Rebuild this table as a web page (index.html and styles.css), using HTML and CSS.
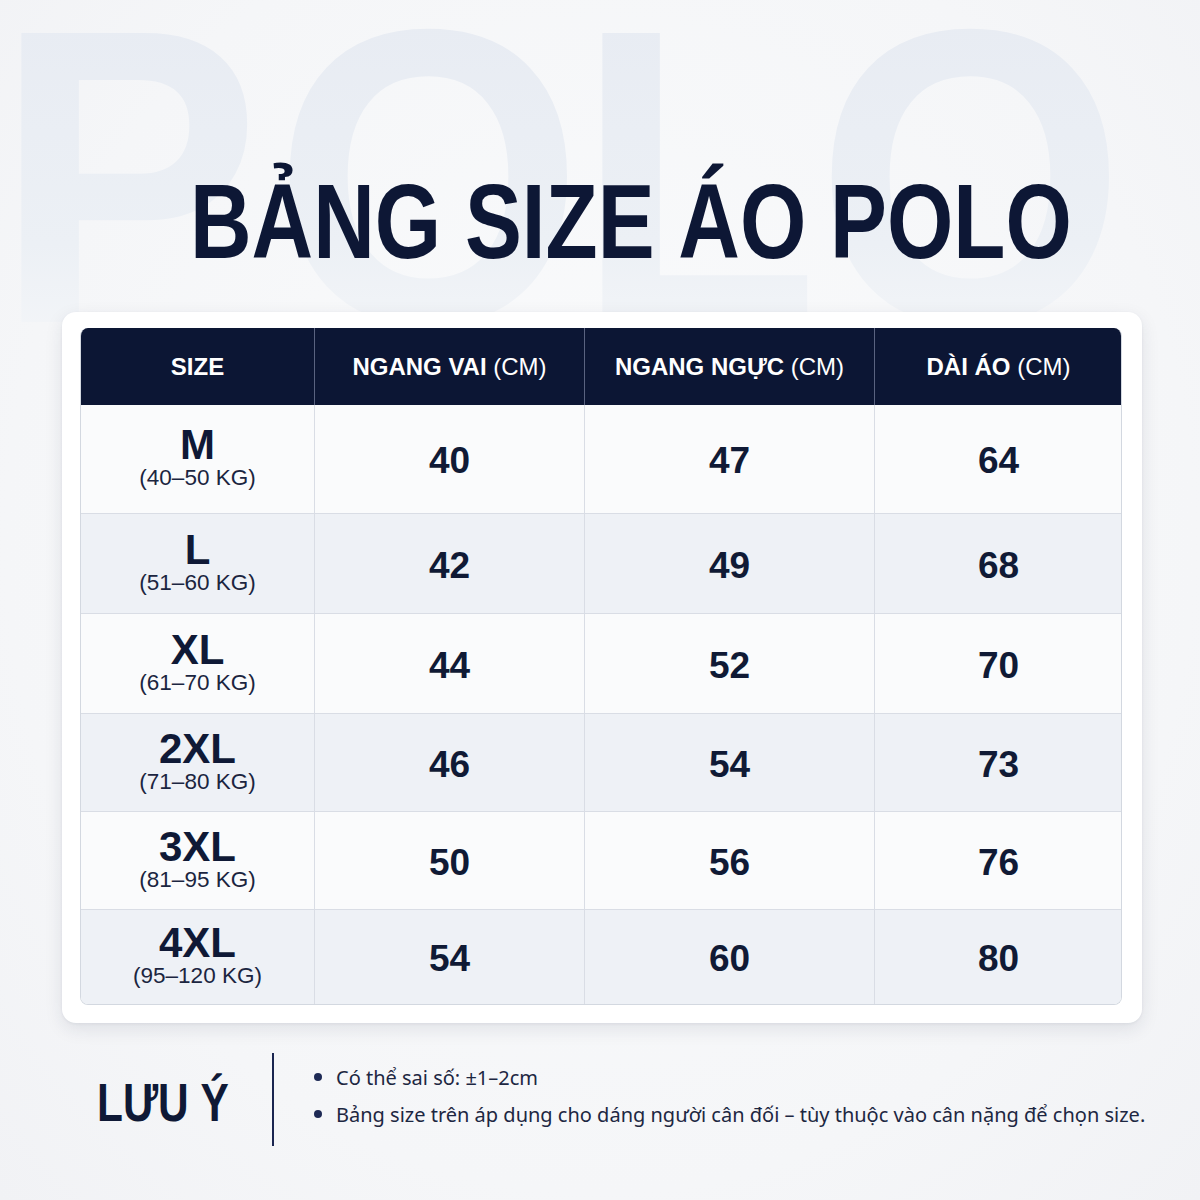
FILE: index.html
```html
<!DOCTYPE html>
<html lang="vi">
<head>
<meta charset="utf-8">
<title>Bảng size áo polo</title>
<link rel="stylesheet" href="styles.css">
</head>
<body>
<div class="page">
  <svg class="watermark" width="1200" height="360" viewBox="0 0 1200 360" aria-hidden="true">
    <defs>
      <linearGradient id="wmfade" gradientUnits="userSpaceOnUse" x1="0" y1="20" x2="0" y2="340">
        <stop offset="0" stop-color="#e8ecf3"/>
        <stop offset="0.7" stop-color="#ecf0f5"/>
        <stop offset="1" stop-color="#f3f5f8"/>
      </linearGradient>
    </defs>
    <g transform="scale(0.95,1)">
      <text class="wm-text" x="-5.6 287.8 606 858.3" y="322" fill="url(#wmfade)">POLO</text>
    </g>
  </svg>

  <h1 class="title"><span class="title-text">BẢNG SIZE ÁO POLO</span></h1>

  <div class="card">
    <div class="table">
      <div class="row head">
        <div class="cell"><span class="th">SIZE</span></div>
        <div class="cell"><span class="th">NGANG VAI <span class="unit">(CM)</span></span></div>
        <div class="cell"><span class="th">NGANG NGỰC <span class="unit">(CM)</span></span></div>
        <div class="cell"><span class="th">DÀI ÁO <span class="unit">(CM)</span></span></div>
      </div>
      <div class="row r1">
        <div class="cell size"><span class="lbl">M</span><span class="kg">(40–50 KG)</span></div>
        <div class="cell num">40</div>
        <div class="cell num">47</div>
        <div class="cell num">64</div>
      </div>
      <div class="row alt">
        <div class="cell size"><span class="lbl">L</span><span class="kg">(51–60 KG)</span></div>
        <div class="cell num">42</div>
        <div class="cell num">49</div>
        <div class="cell num">68</div>
      </div>
      <div class="row">
        <div class="cell size"><span class="lbl">XL</span><span class="kg">(61–70 KG)</span></div>
        <div class="cell num">44</div>
        <div class="cell num">52</div>
        <div class="cell num">70</div>
      </div>
      <div class="row alt r98">
        <div class="cell size"><span class="lbl">2XL</span><span class="kg">(71–80 KG)</span></div>
        <div class="cell num">46</div>
        <div class="cell num">54</div>
        <div class="cell num">73</div>
      </div>
      <div class="row r98">
        <div class="cell size"><span class="lbl">3XL</span><span class="kg">(81–95 KG)</span></div>
        <div class="cell num">50</div>
        <div class="cell num">56</div>
        <div class="cell num">76</div>
      </div>
      <div class="row alt last">
        <div class="cell size"><span class="lbl">4XL</span><span class="kg">(95–120 KG)</span></div>
        <div class="cell num">54</div>
        <div class="cell num">60</div>
        <div class="cell num">80</div>
      </div>
    </div>
  </div>

  <div class="note">
    <div class="note-title"><span class="note-title-text">LƯU Ý</span></div>
    <div class="note-divider"></div>
    <ul class="note-list">
      <li>Có thể sai số: ±1–2cm</li>
      <li>Bảng size trên áp dụng cho dáng người cân đối – tùy thuộc vào cân nặng để chọn size.</li>
    </ul>
  </div>
</div>
</body>
</html>
```

FILE: styles.css
```css
* { box-sizing: border-box; }

html, body {
  margin: 0;
  padding: 0;
  background: #f6f7f9;
}

body {
  font-family: "Liberation Sans", Arial, sans-serif;
  color: #0f1936;
}

.page {
  position: relative;
  width: 1200px;
  height: 1200px;
  overflow: hidden;
  background: radial-gradient(ellipse at 50% 45%, #fafbfc 0%, #f5f6f8 70%, #f1f2f5 100%);
}

.watermark {
  position: absolute;
  left: 0;
  top: 0;
  z-index: 0;
}

.wm-text {
  font-family: "Liberation Sans", Arial, sans-serif;
  font-weight: 700;
  font-size: 420px;
}

.title {
  position: relative;
  z-index: 1;
  margin: 0;
  padding: 168px 0 0 190px;
  font-family: "Liberation Sans", Arial, sans-serif;
  font-weight: 700;
  font-size: 106px;
  line-height: 106px;
  color: #0d1735;
  white-space: nowrap;
  height: 274px;
}

.title-text {
  display: inline-block;
  transform: scaleX(0.805);
  transform-origin: 0 0;
}

.card {
  position: relative;
  z-index: 1;
  margin: 38px 0 0 62px;
  width: 1080px;
  padding: 16px 20px 18px 18px;
  background: #ffffff;
  border-radius: 14px;
  box-shadow: 0 6px 18px rgba(25, 35, 70, 0.10), 0 1px 3px rgba(25, 35, 70, 0.06);
}

.table {
  border-radius: 8px;
  overflow: hidden;
  border: 1px solid #d3d8e0;
  border-top: none;
}

.row {
  display: grid;
  grid-template-columns: 233px 270px 290px 248px;
  height: 100px;
  background: #fafbfc;
  border-top: 1px solid #d9dde5;
}

.row.r1 { height: 108px; border-top: none; }
.row.r98 { height: 98px; }
.row.last { height: 95px; }
.row.alt { background: #eef1f6; }

.cell {
  display: flex;
  align-items: center;
  justify-content: center;
  border-left: 1px solid #d9dde5;
}

.cell:first-child { border-left: none; }

.row.head {
  height: 77px;
  background: #0c1634;
  border-top: none;
}

.row.head .cell {
  border-left-color: #5a6380;
}

.th {
  color: #ffffff;
  font-weight: 700;
  font-size: 24px;
  line-height: 28px;
  white-space: nowrap;
}

.th .unit {
  font-weight: 400;
}

.size {
  flex-direction: column;
}

.lbl {
  font-weight: 700;
  font-size: 42px;
  line-height: 38px;
  color: #0f1936;
}

.kg {
  font-size: 22.5px;
  line-height: 28px;
  color: #1b2540;
}

.num {
  font-weight: 700;
  font-size: 37px;
  padding-top: 4px;
  color: #101a35;
}

.note {
  position: relative;
  z-index: 1;
  display: flex;
  align-items: center;
  height: 93px;
  margin-top: 30px;
  padding-left: 97px;
}

.note-title {
  width: 175px;
  font-weight: 700;
  font-size: 53px;
  line-height: 54px;
  color: #0f1936;
  padding-top: 6px;
  white-space: nowrap;
}

.note-title-text {
  display: inline-block;
  transform: scaleX(0.8);
  transform-origin: 0 0;
}

.note-divider {
  width: 2px;
  height: 93px;
  background: #1a2550;
}

.note-list {
  list-style: none;
  margin: -8px 0 0 0;
  padding: 0 0 0 40px;
  font-family: "Noto Sans", "Open Sans", sans-serif;
  font-size: 20px;
  line-height: 37px;
  color: #1d2742;
}

.note-list li {
  display: flex;
  align-items: center;
  white-space: nowrap;
}

.note-list li::before {
  content: "";
  width: 8px;
  height: 8px;
  border-radius: 50%;
  background: #1e2a55;
  margin-right: 14px;
  flex: none;
}
```
